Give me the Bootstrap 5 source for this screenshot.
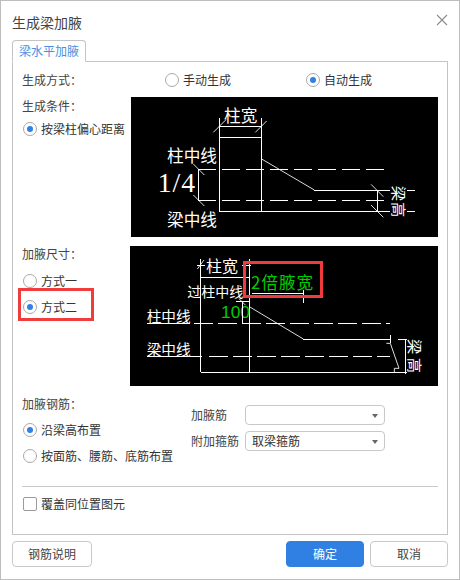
<!doctype html>
<html lang="zh"><head><meta charset="utf-8">
<link href="https://cdn.jsdelivr.net/npm/bootstrap@5.3.0/dist/css/bootstrap.min.css" rel="stylesheet">
<style>
html,body{height:100%;margin:0;background:#fff}
body{font-family:"Noto Sans CJK SC","Liberation Sans",sans-serif;font-size:12px;color:#333;line-height:16px}
.dlg{width:460px;height:580px;border:1px solid #bdbdbd;position:relative;padding:0 11px}
.dlg-head{height:39px;align-items:flex-start;padding-top:12px}
.dlg-title{font-size:14px;line-height:18px;color:#444}
.dlg-x{width:12px;height:12px;margin-right:0;margin-top:1px;display:block}
.tab-strip{height:22px;border-bottom:1px solid #c4c4c4}
.tab-one{width:74px;height:22px;border:1px solid #c4c4c4;border-bottom:1px solid #fff;border-radius:4px 4px 0 0;color:#4a90e2;text-align:center;line-height:20px;background:#fff;font-size:12px}
.pane{height:473px;border:1px solid #c4c4c4;border-top:0;padding:9px 9px 0 9px}
.lbl{color:#444;height:16px}
.way-row{height:18px;align-items:center}
.rd{display:flex;align-items:center;gap:4px;height:16px;color:#333;white-space:nowrap}
.rd-dot{width:14px;height:14px;border:1px solid #a8a8a8;border-radius:50%;background:#fff;flex:none;position:relative;margin-left:1px}
.rd-dot.on::after{content:"";position:absolute;left:3px;top:3px;width:6px;height:6px;border-radius:50%;background:#2f80e7}
.col-a{width:109px;flex:none}
.col-b{width:108px;flex:none}
.col-c{width:169px;flex:none}
.pic{display:block;background:#000;flex:none}
.pic line,.pic polyline{fill:none;stroke:#fff;stroke-width:3;shape-rendering:crispEdges}
.pic rect{fill:none;stroke:#fff;stroke-width:3;shape-rendering:crispEdges}
.pic .ang{shape-rendering:auto;stroke-width:2.6}
.pic text{fill:#fff;font-family:"Noto Sans CJK SC",sans-serif}
.pic .grn{fill:#0c0}
.pic .ser{font-family:"Liberation Serif",serif}
.pic .lib{font-family:"Liberation Sans",sans-serif}
.pic .dash{stroke-dasharray:55 17}
.mark-box{border:3px solid #f03c3c;position:absolute}
.mark-one{left:17px;top:287px;width:76px;height:33px}
.mark-two{left:242px;top:260px;width:80px;height:37px}
.sel-box{width:140px;height:20px;border:1px solid #c8c8c8;border-radius:4px;position:relative;padding-left:6px;line-height:18px;color:#333;background:#fff}
.sel-box::after{content:"";position:absolute;right:6px;top:8px;border:3px solid transparent;border-top:4px solid #666;border-bottom:0}
.sel-lbl{width:54px;flex:none;color:#444}
.rule{border-top:1px solid #c8c8c8;height:0}
.chk{width:14px;height:14px;border:1px solid #9a9a9a;border-radius:2px;background:#fff;flex:none;margin-left:1px}
.foot{padding-top:6px}
.b-plain,.b-main{height:26px;border-radius:4px;font-size:12px;line-height:24px;padding:0;text-align:center;display:block}
.b-plain{background:#fff;border:1px solid #c8c8c8;color:#444}
.b-main{background:#2f80e2;border:1px solid #2f80e2;color:#fff}
.w-way1{width:142px}.w-way2{width:141px}
.w-b1{width:80px}.w-b2{width:78px}
.gap-l{margin-left:6px}
.top-cond{margin-top:1px;margin-bottom:7px}
.top-one{margin-top:11px}
.top-two{margin-top:10px}
.top-r1{margin-top:10px}
.row-two{margin-top:9px}
.row-three{margin-top:10px}
.sel-wrap{padding-top:9px}
.sel-gap{margin-top:6px}
.rule-gap{margin-top:22px}
.chk-gap{margin-top:9px}
</style></head><body>
<div class="dlg">
 <div class="dlg-head d-flex justify-content-between">
  <div class="dlg-title">生成梁加腋</div>
  <svg class="dlg-x" viewBox="0 0 12 12" aria-label="关闭"><path d="M1 1 11 11M11 1 1 11" stroke="#8c8c8c" stroke-width="1.1" fill="none"/></svg>
 </div>
 <div class="tab-strip d-flex"><div class="tab-one">梁水平加腋</div></div>
 <div class="pane">
  <div class="d-flex way-row">
   <div class="lbl w-way1">生成方式：</div>
   <div class="rd w-way2"><span class="rd-dot"></span>手动生成</div>
   <div class="rd"><span class="rd-dot on"></span>自动生成</div>
  </div>
  <div class="d-flex mt-2">
   <div class="col-a">
    <div class="lbl top-cond">生成条件：</div>
    <div class="rd"><span class="rd-dot on"></span>按梁柱偏心距离</div>
   </div>
   <svg class="pic" width="307" height="140" viewBox="18 21 921 420">
    <rect x="284" y="142" width="126" height="222"/>
    <line x1="284" y1="85" x2="284" y2="142"/><line x1="410" y1="85" x2="410" y2="142"/>
    <line x1="284" y1="109" x2="410" y2="109"/>
    <line class="ang" x1="265" y1="127" x2="303" y2="89"/><line class="ang" x1="391" y1="127" x2="425" y2="93"/>
    <text x="297" y="97" font-size="50">柱宽</text>
    <text x="126" y="216" font-size="50">柱中线</text>
    <text x="126" y="408" font-size="50">梁中线</text>
    <text class="ser" x="98" y="305" font-size="83" letter-spacing="3">1/4</text>
    <line x1="218" y1="238" x2="272" y2="238"/><line x1="218" y1="330" x2="272" y2="330"/>
    <line class="dash" x1="290" y1="238" x2="778" y2="238"/>
    <line class="dash" x1="290" y1="330" x2="778" y2="330"/>
    <line x1="220" y1="238" x2="220" y2="330"/>
    <line class="ang" x1="205" y1="222" x2="238" y2="255"/><line class="ang" x1="205" y1="315" x2="238" y2="348"/>
    <polyline class="ang" points="410,207 568,300"/>
    <line x1="568" y1="300" x2="795" y2="300"/><line x1="847" y1="300" x2="870" y2="300"/>
    <line x1="410" y1="364" x2="795" y2="364"/><line x1="847" y1="364" x2="870" y2="364"/>
    <line x1="757" y1="300" x2="757" y2="364"/>
    <line class="ang" x1="738" y1="283" x2="775" y2="320"/><line class="ang" x1="738" y1="345" x2="775" y2="382"/>
    <text font-size="46" transform="translate(805 287) rotate(90)">梁</text>
    <text font-size="46" transform="translate(805 336) rotate(90)">高</text>
   </svg>
  </div>
  <div class="d-flex row-two">
   <div class="col-b">
    <div class="lbl">加腋尺寸：</div>
    <div class="rd top-one"><span class="rd-dot"></span>方式一</div>
    <div class="rd top-two"><span class="rd-dot on"></span>方式二</div>
   </div>
   <svg class="pic" width="308" height="140" viewBox="15 18 924 420">
    <line x1="227" y1="57" x2="227" y2="397"/><line x1="373" y1="57" x2="373" y2="397"/>
    <line x1="227" y1="112" x2="373" y2="112"/>
    <line x1="227" y1="397" x2="808" y2="397"/>
    <line x1="215" y1="75" x2="240" y2="75"/><line x1="350" y1="75" x2="378" y2="75"/>
    <line class="ang" x1="217" y1="87" x2="237" y2="60"/>
    <text x="243" y="96" font-size="48">柱宽</text>
    <text x="187" y="172" font-size="42">过柱中线</text>
    <text x="65" y="247" font-size="44">柱中线</text>
    <text x="65" y="345" font-size="44">梁中线</text>
    <line x1="65" y1="250" x2="196" y2="250"/><line x1="65" y1="349" x2="232" y2="349"/>
    <line class="dash" x1="208" y1="250" x2="796" y2="250"/>
    <line class="dash" x1="253" y1="349" x2="796" y2="349"/>
    <text class="grn lib" x="288" y="233" font-size="52">100</text>
    <text class="grn" x="378" y="147" font-size="50" letter-spacing="3">2倍腋宽</text>
    <line x1="380" y1="160" x2="536" y2="160"/><line x1="536" y1="150" x2="536" y2="188"/>
    <line x1="332" y1="185" x2="373" y2="185"/><line x1="352" y1="185" x2="352" y2="252"/>
    <line class="ang" x1="342" y1="176" x2="362" y2="196"/>
    <polyline class="ang" points="373,200 535,297"/>
    <line x1="535" y1="297" x2="796" y2="297"/><line x1="796" y1="285" x2="796" y2="310"/>
    <polyline class="ang" points="784,310 796,310 822,385 808,385 808,397"/>
    <line x1="818" y1="297" x2="846" y2="297"/><line x1="808" y1="397" x2="846" y2="397"/>
    <line x1="840" y1="297" x2="840" y2="402"/>
    <text font-size="46" transform="translate(851 297) rotate(90)">梁</text>
    <text font-size="46" transform="translate(851 353) rotate(90)">高</text>
   </svg>
  </div>
  <div class="d-flex row-three">
   <div class="col-c">
    <div class="lbl">加腋钢筋：</div>
    <div class="rd top-r1"><span class="rd-dot on"></span>沿梁高布置</div>
    <div class="rd top-two"><span class="rd-dot"></span>按面筋、腰筋、底筋布置</div>
   </div>
   <div class="sel-wrap">
    <div class="d-flex align-items-center"><div class="sel-lbl">加腋筋</div><div class="sel-box"></div></div>
    <div class="d-flex align-items-center sel-gap"><div class="sel-lbl">附加箍筋</div><div class="sel-box">取梁箍筋</div></div>
   </div>
  </div>
  <div class="rule rule-gap"></div>
  <div class="d-flex align-items-center chk-gap"><span class="chk"></span><span class="ms-1">覆盖同位置图元</span></div>
 </div>
 <div class="foot d-flex">
  <button class="b-plain w-b1" type="button">钢筋说明</button>
  <button class="b-main w-b2 ms-auto" type="button">确定</button>
  <button class="b-plain w-b2 gap-l" type="button">取消</button>
 </div>
 <div class="mark-box mark-one"></div>
 <div class="mark-box mark-two"></div>
</div>
<script src="https://cdn.jsdelivr.net/npm/bootstrap@5.3.0/dist/js/bootstrap.bundle.min.js"></script>
</body></html>
